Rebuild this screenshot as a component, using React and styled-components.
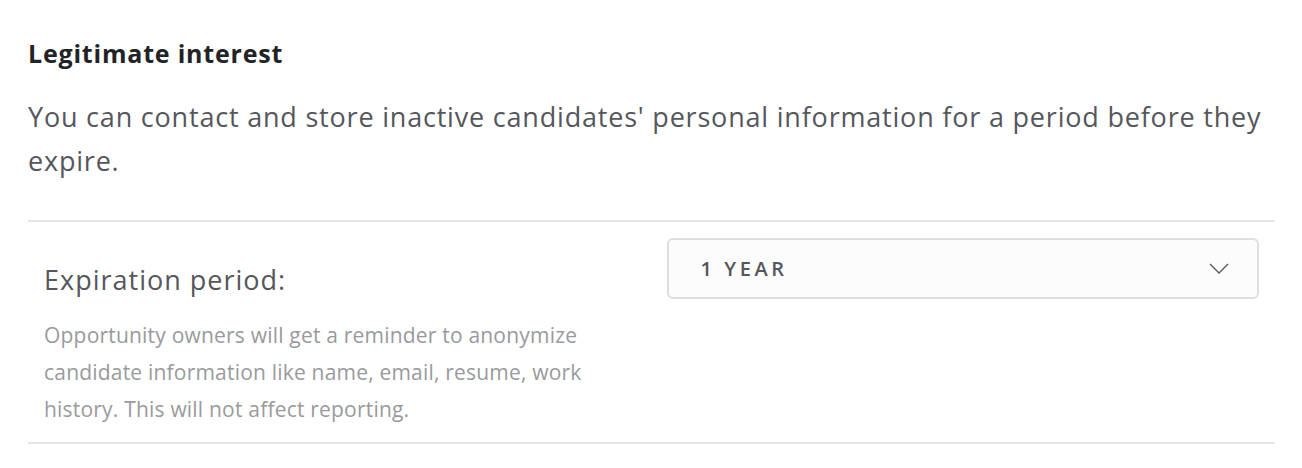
import styled, { createGlobalStyle } from "styled-components";

const GlobalStyle = createGlobalStyle`
  body {
    margin: 0;
    background: #fff;
    font-family: "Open Sans", "Noto Sans", sans-serif;
  }
`;

const Section = styled.section`
  padding: 38px 27px 0 28px;
`;

const Heading = styled.h2`
  margin: 0 0 27px;
  font-size: 25px;
  line-height: 30px;
  font-weight: 700;
  letter-spacing: 0.8px;
  color: #222326;
`;

const Intro = styled.p`
  margin: 0;
  padding-bottom: 37px;
  font-size: 27px;
  line-height: 44px;
  letter-spacing: 0.8px;
  color: #55575c;
  border-bottom: 2px solid #e6e6e6;
`;

const Row = styled.div`
  display: grid;
  grid-template-columns: 1fr 1fr;
  gap: 30px;
  padding: 16px 16px 14px;
  border-bottom: 2px solid #e6e6e6;
`;

const LabelColumn = styled.div`
  padding-top: 25px;
`;

const Label = styled.label`
  display: block;
  margin-bottom: 20px;
  font-size: 27px;
  line-height: 34px;
  letter-spacing: 1px;
  color: #55575c;
`;

const Help = styled.p`
  margin: 0;
  font-size: 21px;
  line-height: 37px;
  letter-spacing: 0.2px;
  color: #999a9c;
`;

const Select = styled.button`
  display: flex;
  align-items: center;
  justify-content: space-between;
  width: 100%;
  height: 61px;
  padding: 0 28px 0 32px;
  border: 2px solid #dedede;
  border-radius: 6px;
  background: #fcfcfc;
  font-family: inherit;
  font-size: 20px;
  font-weight: 600;
  letter-spacing: 3.6px;
  color: #55575c;
  cursor: pointer;
`;

const Chevron = () => (
  <svg width="20" height="11" viewBox="0 0 20 11" fill="none">
    <path d="M1 1l9 9 9-9" stroke="#55575c" strokeWidth="1.3" />
  </svg>
);

export default function App() {
  return (
    <>
      <GlobalStyle />
      <Section>
        <Heading>Legitimate interest</Heading>
        <Intro>
          You can contact and store inactive candidates' personal information
          for a period before they expire.
        </Intro>
        <Row>
          <LabelColumn>
            <Label>Expiration period:</Label>
            <Help>
              Opportunity owners will get a reminder to anonymize candidate
              information like name, email, resume, work history. This will not
              affect reporting.
            </Help>
          </LabelColumn>
          <div>
            <Select type="button">
              <span>1 YEAR</span>
              <Chevron />
            </Select>
          </div>
        </Row>
      </Section>
    </>
  );
}
